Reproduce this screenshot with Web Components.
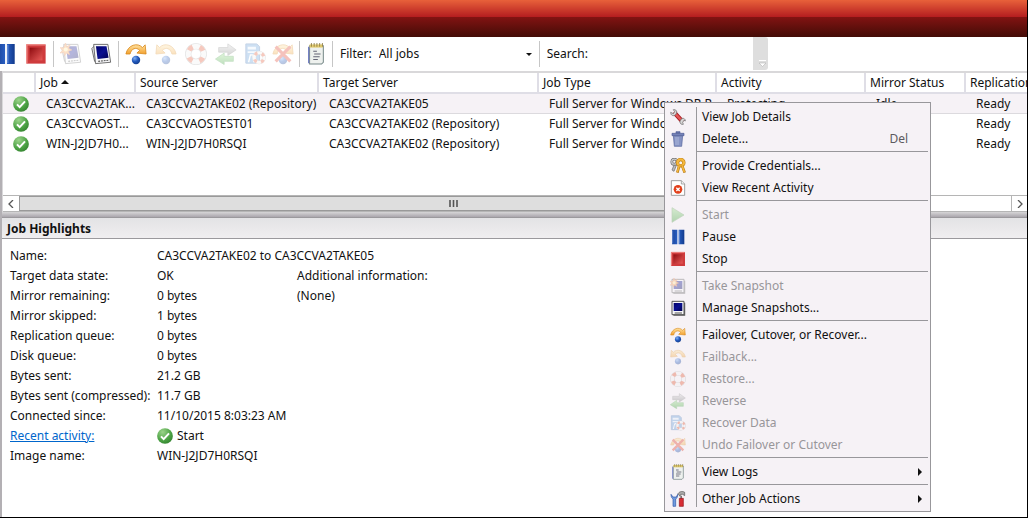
<!DOCTYPE html>
<html lang="en">
<head>
<meta charset="utf-8">
<title>Manage Jobs</title>
<style>
  body { margin: 0; font: 12px/20px "Noto Sans", "Open Sans", sans-serif; color: #111; background: #fff; }
</style>
</head>
<body>
<job-console>
  <job-toolbar slot="toolbar"></job-toolbar>
  <job-list slot="jobs"></job-list>
  <job-highlights slot="details"></job-highlights>
  <context-menu slot="menu">
    <menu-entry icon="wrench">View Job Details</menu-entry>
    <menu-entry icon="trash" shortcut="Del">Delete...</menu-entry>
    <menu-divider></menu-divider>
    <menu-entry icon="keys">Provide Credentials...</menu-entry>
    <menu-entry icon="activity">View Recent Activity</menu-entry>
    <menu-divider></menu-divider>
    <menu-entry icon="start" disabled>Start</menu-entry>
    <menu-entry icon="pause">Pause</menu-entry>
    <menu-entry icon="stop">Stop</menu-entry>
    <menu-divider></menu-divider>
    <menu-entry icon="takesmall" disabled>Take Snapshot</menu-entry>
    <menu-entry icon="snapsmall">Manage Snapshots...</menu-entry>
    <menu-divider></menu-divider>
    <menu-entry icon="failover">Failover, Cutover, or Recover...</menu-entry>
    <menu-entry icon="failback" disabled>Failback...</menu-entry>
    <menu-entry icon="restore" disabled>Restore...</menu-entry>
    <menu-entry icon="reverse" disabled>Reverse</menu-entry>
    <menu-entry icon="recover" disabled>Recover Data</menu-entry>
    <menu-entry icon="undo" disabled>Undo Failover or Cutover</menu-entry>
    <menu-divider></menu-divider>
    <menu-entry icon="logs" submenu>View Logs</menu-entry>
    <menu-divider></menu-divider>
    <menu-entry icon="tools" submenu>Other Job Actions</menu-entry>
  </context-menu>
</job-console>

<script>
const define = (name, html, setup) => customElements.define(name, class extends HTMLElement {
  constructor() {
    super();
    this.attachShadow({ mode: 'open' });
  }
  connectedCallback() {
    this.shadowRoot.innerHTML = typeof html === 'function' ? html(this) : html;
    if (setup) setup(this);
  }
});

/* Icons, all on a 24 x 24 grid */
const defs = `<defs>
  <linearGradient id="blue" x2="1"><stop stop-color="#1b459c"/><stop offset=".5" stop-color="#2a62c8"/><stop offset="1" stop-color="#123a8c"/></linearGradient>
  <linearGradient id="red" x2="1" y2="1"><stop stop-color="#8e0b0f"/><stop offset="1" stop-color="#e85a58"/></linearGradient>
  <linearGradient id="navy" x2="1" y2="1"><stop stop-color="#00006a"/><stop offset=".5" stop-color="#0a1090"/><stop offset="1" stop-color="#000050"/></linearGradient>
  <linearGradient id="gold" x2="0" y2="1"><stop stop-color="#ffe2a0"/><stop offset="1" stop-color="#f3a02c"/></linearGradient>
  <linearGradient id="leaf" x2="0" y2="1"><stop stop-color="#9be08a"/><stop offset="1" stop-color="#2f9a2c"/></linearGradient>
  <linearGradient id="grey" x2="0" y2="1"><stop stop-color="#ddd"/><stop offset="1" stop-color="#777"/></linearGradient>
  <radialGradient id="ball" cx=".35" cy=".3" r=".8"><stop stop-color="#7fb0f4"/><stop offset=".5" stop-color="#2259bd"/><stop offset="1" stop-color="#123a86"/></radialGradient>
  <radialGradient id="ok" cx=".35" cy=".25" r=".85"><stop stop-color="#9bd38a"/><stop offset=".6" stop-color="#4da345"/><stop offset="1" stop-color="#2f7f2c"/></radialGradient>
</defs>`;
const snap = `<path d="M2 6 5 3l3 1v17l-3-1z" fill="#e8e8ec" stroke="#444" stroke-width=".8"/>
  <path d="M4 1.500h15.500l3 19.500L6 22.500z" fill="#f6f6f8" stroke="#555" stroke-width=".9"/>
  <path d="M6.500 3.500h11.500l2.300 12.500-12 1.500z" fill="url(#navy)"/><path d="M9 20l11-1.200" stroke="#555" stroke-width="1.200" stroke-dasharray="2 1"/>`;
const snapSmall = `<path d="M3 2h18v20H3z" fill="#f7f7f9" stroke="#555" stroke-width="1.500"/><path d="M22 4v19H5" fill="none" stroke="#555" stroke-width="1.600"/>
  <path d="M5.500 4.500h13v12h-13z" fill="url(#navy)"/><path d="M7 19.500h11" stroke="#555" stroke-width="1.500"/>`;
const star = `<path d="M6 0l1.400 4 3.600-2-1.600 3.800L13 7.500 9.300 9l1.200 3.700L6.800 11 5 14l-.8-3.700L0 11l2.800-3L0 5l4 .3z" fill="#f6a04c" stroke="#e0662c" stroke-width=".6"/><circle cx="6.300" cy="7" r="2.200" fill="#ffe9a0"/>`;
const arc = `<path d="M1 12C3 2 14-1 19 5l3-3 1 10-10-1 3-3C12 4 7 6 5.500 12z" fill="url(#gold)" stroke="#d98a1e" stroke-width=".9"/>`;
const ball = `<circle cx="12" cy="18.500" r="4.600" fill="url(#ball)"/>`;
const ring = `<circle cx="12" cy="12" r="8.500" fill="none" stroke="#999" stroke-width="6.600"/><circle cx="12" cy="12" r="8.500" fill="none" stroke="#f1f1f1" stroke-width="5.400"/>
  <circle cx="12" cy="12" r="8.500" fill="none" stroke="#e2502c" stroke-width="5.400" stroke-dasharray="5.350 8" stroke-dashoffset="-4"/>`;
const icons = {
  ok: `<circle cx="12" cy="12" r="11.800" fill="url(#ok)"/><path d="M6 12.500l4 4.200L18 8" fill="none" stroke="#fff" stroke-width="3"/>`,
  pause: `<path d="M3 1h8v22H3zM13 1h8.500v22H13z" fill="url(#blue)"/><path d="M4 2v20M14 2v20" stroke="#7ba0e0" stroke-width="1"/>`,
  stop: `<path d="M1.500 1.500h21v21h-21z" fill="#cf3b3d"/><path d="M2 22V2h20" fill="none" stroke="#f08a86" stroke-width="1.500"/><path d="M5 5h14v14H5z" fill="url(#red)"/>`,
  start: `<path d="M3 1l18 11L3 23z" fill="url(#leaf)" stroke="#5a9a50"/>`,
  snap, snapsmall: snapSmall, take: snap + star, takesmall: snapSmall + star,
  failover: arc + ball,
  failback: `<g transform="matrix(-1 0 0 1 24 0)">${arc}</g>${ball}`,
  restore: ring,
  reverse: `<path d="M4 5h10V1l9 6.500-9 6V10H4z" fill="url(#grey)" stroke="#777" stroke-width=".8"/><path d="M20 14.500H10V11l-9.500 6.500L10 23.500V20h10z" fill="url(#leaf)" stroke="#3c9a3c" stroke-width=".8"/>`,
  recover: `<path d="M2 1h12l3 3v18H2z" fill="#5e9bd8" stroke="#3a6cae"/><path d="M4 4h9v3H4zM4 9h9v2H4z" fill="#e4f0fc"/><path d="M5 21l2-8h2l2 8" fill="none" stroke="#fff" stroke-width="1.500"/><g transform="translate(9 8.500) scale(.62)">${ring}</g>`,
  undo: `${arc}${ball}<path d="M4 4l16 16M20 4L4 20" stroke="#e03a24" stroke-width="3.400"/>`,
  logs: `<path d="M5 3h15v18l-2 2H5z" fill="#eef1ee" stroke="#788" stroke-width="1.100"/><path d="M4 4v18" stroke="#6a78c0" stroke-width="1.300"/><path d="M5 1.500h14.500v3.500H5z" fill="#e2cc70"/><path d="M7 0v4M10 0v4M13 0v4M16 0v4M19 0v4" stroke="#857540" stroke-width=".9"/><path d="M9 9h4M10 12h7M9 15h7M9 18h5" stroke="#667" stroke-width="1.300"/>`,
  wrench: `<path d="M6 5l13 14" stroke="#a81e22" stroke-width="6.500"/><path d="M6 5l13 14" stroke="#e65555" stroke-width="3.500"/><path d="M1 5c0 5 4 6 7 4l2-3C11 2 7 0 5 1l2 3-2 3zM23 18c0-4-4-5-6-3l-2 3c-1 4 3 6 5 5l-1-3 2-3z" fill="#d8d8d8" stroke="#666"/>`,
  trash: `<path d="M5 7h14l-1.500 16h-11z" fill="#8794c4" stroke="#55639c"/><path d="M3 3.500h18V7H3zM9 1h6v2H9z" fill="#7482b8" stroke="#4d5a94"/><path d="M9 9v12M12 9v12" stroke="#b4bde0" stroke-width="1.300"/>`,
  keys: `<path d="M7 8l-4 10 3 2 4-10" fill="#bbb" stroke="#666"/><circle cx="6.500" cy="5.500" r="3.800" fill="none" stroke="#666" stroke-width="4"/><circle cx="6.500" cy="5.500" r="3.800" fill="none" stroke="#ccc" stroke-width="2"/><circle cx="16" cy="7" r="4.800" fill="none" stroke="#b87810" stroke-width="5"/><circle cx="16" cy="7" r="4.800" fill="none" stroke="#f4b83e" stroke-width="3.400"/><path d="M14 11l-3 11M18 11l4 11" stroke="#b87810" stroke-width="4"/><path d="M14 11l-3 10M18 11l3.500 10" stroke="#f4b83e" stroke-width="2.400"/>`,
  activity: `<path d="M2 1h15l5 5v17H2z" fill="#fff" stroke="#888" stroke-width="1.200"/><path d="M17 1v5h5" fill="#eee" stroke="#888"/><circle cx="12" cy="14" r="6.500" fill="#e2401c"/><path d="M9.500 11.500l5 5M14.500 11.500l-5 5" stroke="#fff" stroke-width="2"/>`,
  tools: `<path d="M1.500 5c0 5 2 6 3 7v11h4V12c2-1 3-3 3-7l-2 4h-5z" fill="#6f9be0" stroke="#2d55a4"/><path d="M12 4c3-4 7-4 10-2v5l-3-2h-3l-1 3z" fill="#aaa" stroke="#555"/><path d="M15.500 7h2.500v5h-2.500z" fill="#777"/><path d="M14 11h6v12h-6z" fill="#d82c34" stroke="#8e1016"/>`
};
define('job-icon', el => `<style>
  :host { display: block; width: 16px; height: 16px; }
  svg { display: block; width: 100%; height: 100%; }
</style><svg viewBox="0 0 24 24" aria-hidden="true">${defs}${icons[el.getAttribute('name')]}</svg>`);

define('job-console', `<style>
  :host { display: flex; flex-direction: column; position: relative; min-height: 100vh; box-sizing: border-box;
          border: solid #000; border-width: 0 1px 1px 0; overflow: hidden; }
  header { height: 37px; background: linear-gradient(#e8613a, #b41d20 17px, #821312 17px, #430c07); }
  main { flex: 1; display: flex; flex-direction: column; min-width: 0; border-left: 2px solid #b3b0b4; }
</style>
<header></header>
<slot name="toolbar"></slot>
<main><slot name="jobs"></slot><slot name="details"></slot></main>
<slot name="menu"></slot>`);

const tool = (icon, label, cls = '') => `<button type="button" class="${cls}" aria-label="${label}" ${/off/.test(cls) ? 'disabled' : ''}><job-icon name="${icon}"></job-icon></button>`;
define('job-toolbar', `<style>
  :host { display: flex; align-items: center; height: 34px; overflow: hidden; background: #fff; }
  .tools { display: flex; align-items: center; margin-left: -9px; }
  button { display: grid; place-items: center; width: 30px; height: 28px; padding: 0; border: 0; background: none; }
  .narrow { width: 28px; }
  .off job-icon { opacity: .3; }
  job-icon { width: 22px; height: 22px; }
  i { width: 1px; height: 26px; margin: 0 2px; background: #c6c6c6; }
  label { padding: 0 5px; }
  .pick { display: grid; align-items: center; width: 160px; }
  select { grid-area: 1 / 1; appearance: none; width: 100%; height: 22px; padding: 0 2px; border: 0; background: none; font: inherit; color: inherit; }
  .pick svg { grid-area: 1 / 1; justify-self: end; width: 6px; height: 3px; margin-right: 5px; pointer-events: none; }
  input { width: 160px; height: 22px; box-sizing: border-box; border: 0; padding: 0 4px; font: inherit; outline: 0; background: none; }
  .more { align-self: stretch; display: grid; place-items: end center; width: 15px; height: 33px; padding: 0 0 3px 4px; box-sizing: border-box; background: #dedede; border-radius: 0 3px 3px 0; }
</style>
<div class="tools" role="toolbar" aria-label="Job actions">
  ${tool('pause', 'Pause')}${tool('stop', 'Stop')}<i></i>
  ${tool('take', 'Take Snapshot', 'off')}${tool('snap', 'Manage Snapshots')}<i></i>
  ${tool('failover', 'Failover, Cutover, or Recover')}${tool('failback', 'Failback', 'off')}${tool('restore', 'Restore', 'off')}${tool('reverse', 'Reverse', 'off')}${tool('recover', 'Recover Data', 'off narrow')}${tool('undo', 'Undo Failover or Cutover', 'off narrow')}<i></i>
  ${tool('logs', 'View Logs', 'narrow')}<i></i>
</div>
<label for="filter">Filter:</label>
<div class="pick">
  <select id="filter"><option>All jobs</option></select>
  <svg viewBox="0 0 6 3"><path d="M0 0h6L3 3z" fill="#111"/></svg>
</div>
<i></i>
<label for="search">Search:</label>
<input id="search" type="text">
<button type="button" class="more" aria-label="More buttons"><svg width="7" height="7" viewBox="0 0 7 7"><path d="M0 .5h7" stroke="#fff"/><path d="M0 3h7L3.500 6.500z" fill="#fff" stroke="#aaa" stroke-width=".5"/></svg></button>`);

const rows = [
  ['CA3CCVA2TAK...', 'CA3CCVA2TAKE02 (Repository)', 'CA3CCVA2TAKE05', 'Full Server for Windows DR R...', 'Protecting', 'Idle', 'Ready'],
  ['CA3CCVAOST...', 'CA3CCVAOSTEST01', 'CA3CCVA2TAKE02 (Repository)', 'Full Server for Windows', '', '', 'Ready'],
  ['WIN-J2JD7H0...', 'WIN-J2JD7H0RSQI', 'CA3CCVA2TAKE02 (Repository)', 'Full Server for Windows', '', '', 'Ready']
];
define('job-list', `<style>
  :host { display: block; border-top: 2px solid #d9d8da; border-left: 1px solid #d9d8da; }
  .view { height: 122px; overflow: hidden; }
  table { table-layout: fixed; width: 100%; min-width: 1024px; border-collapse: separate; border-spacing: 0; }
  th, td { text-align: left; font-weight: 400; white-space: nowrap; overflow: hidden; padding: 0; box-sizing: border-box; }
  th { height: 21px; line-height: 19px; padding-left: 4px; border-bottom: 2px solid #dfdee6; border-right: 2px solid #dfdee6; }
  th:last-child { border-right: 0; }
  td { height: 20px; line-height: 18px; padding-left: 10px; border-bottom: 1px solid transparent; }
  tr.on td { background: #f6f2f6; border-bottom-color: #dcdade; }
  .sort { display: inline-block; width: 8px; height: 4px; margin-left: 3px; vertical-align: 3px; }
  .bar { display: flex; height: 15px; border: solid #b5b5b5; border-width: 1px 0; background: #fff; }
  .bar button { width: 16px; padding: 0; border: 0; background: #fff; display: grid; place-items: center; }
  .bar button:last-child { border-left: 1px solid #b5b5b5; }
  .track { flex: 1; }
  .thumb { display: grid; place-items: center; width: 87.500%; height: 100%; box-sizing: border-box; background: #dedede; border: 1px solid #999; }
</style>
<div class="view"><table>
  <colgroup><col style="width:33px"><col style="width:100px"><col style="width:183px"><col style="width:220px"><col style="width:178px"><col style="width:149px"><col style="width:100px"><col></colgroup>
  <thead><tr><th aria-label="State"></th><th>Job<svg class="sort" viewBox="0 0 8 4"><path d="M0 4h8L4 0z" fill="#111"/></svg></th><th>Source Server</th><th>Target Server</th><th>Job Type</th><th>Activity</th><th>Mirror Status</th><th>Replication</th></tr></thead>
  <tbody>${rows.map((r, i) => `<tr class="${i ? '' : 'on'}"><td><job-icon name="ok"></job-icon></td>${r.map(c => `<td>${c}</td>`).join('')}</tr>`).join('')}</tbody>
</table></div>
<div class="bar">
  <button type="button" aria-label="Scroll left"><svg width="6" height="8"><path d="M5 0L1 4l4 4" fill="none" stroke="#555" stroke-width="1.300"/></svg></button>
  <div class="track"><div class="thumb"><svg width="9" height="7"><path d="M1 0v7M4.500 0v7M8 0v7" stroke="#555" stroke-width="1.600"/></svg></div></div>
  <button type="button" aria-label="Scroll right"><svg width="6" height="8"><path d="M1 0l4 4-4 4" fill="none" stroke="#555" stroke-width="1.300"/></svg></button>
</div>`);

define('job-highlights', `<style>
  :host { display: block; padding-top: 5px; background: linear-gradient(#d6d5d7, #aaa6ac 5px, transparent 5px); }
  h2 { margin: 0; height: 20px; padding-left: 5px; font: 700 12px/21px "Noto Sans", "Open Sans", sans-serif; background: linear-gradient(#e3e3e5, #f0eef0); border-bottom: 1px solid #9b999d; border-top: 1px solid #9b999d; }
  dl { display: grid; grid-template-columns: 147px 140px auto; justify-content: start; grid-auto-rows: 20px; margin: 0; padding: 7px 0 0 8px; white-space: nowrap; }
  dt { grid-column: 1; }
  dd { margin: 0; grid-column: 2; }
  .extra { grid-column: 3; grid-row: 2; }
  .extra-value { grid-column: 3; grid-row: 3; }
  .state { display: flex; align-items: center; gap: 4px; }
  a { color: #0066cc; }
</style>
<h2>Job Highlights</h2>
<dl>
  <dt>Name:</dt><dd>CA3CCVA2TAKE02 to CA3CCVA2TAKE05</dd>
  <dt>Target data state:</dt><dd>OK</dd>
  <dt class="extra">Additional information:</dt><dd class="extra-value">(None)</dd>
  <dt>Mirror remaining:</dt><dd>0 bytes</dd>
  <dt>Mirror skipped:</dt><dd>1 bytes</dd>
  <dt>Replication queue:</dt><dd>0 bytes</dd>
  <dt>Disk queue:</dt><dd>0 bytes</dd>
  <dt>Bytes sent:</dt><dd>21.2 GB</dd>
  <dt>Bytes sent (compressed):</dt><dd>11.7 GB</dd>
  <dt>Connected since:</dt><dd>11/10/2015 8:03:23 AM</dd>
  <dt><a href="#activity">Recent activity:</a></dt><dd class="state"><job-icon name="ok"></job-icon>Start</dd>
  <dt>Image name:</dt><dd>WIN-J2JD7H0RSQI</dd>
</dl>`);

define('context-menu', `<style>
  :host { display: block; position: absolute; left: 664px; top: 102px; width: 267px; box-sizing: border-box; padding: 3px 2px 1px 0;
          border: 1px solid #98979b; background: linear-gradient(#98979b, #98979b) 31px 4px / 1px calc(100% - 8px) no-repeat #f6f2f6; }
</style><slot></slot>`, el => el.setAttribute('role', 'menu'));

define('menu-divider', `<style>
  :host { display: block; height: 1px; margin: 1px 0 3px 31px; background: #98979b; }
</style>`, el => el.setAttribute('role', 'separator'));

define('menu-entry', el => `<style>
  :host { display: block; }
  button { display: grid; grid-template-columns: 16px 1fr auto; column-gap: 16px; align-items: center; width: 100%; height: 22px; padding: 0 20px 0 5px;
           border: 0; background: none; font: inherit; color: #111; text-align: left; white-space: nowrap; }
  button:disabled { color: #98969a; }
  button:disabled job-icon { opacity: .35; }
  .sub { padding-right: 6px; }
  kbd { font: inherit; color: #5c5a5e; }
</style>
<button type="button" role="menuitem" class="${el.hasAttribute('submenu') ? 'sub' : ''}" ${el.hasAttribute('disabled') ? 'disabled' : ''}>
  <job-icon name="${el.getAttribute('icon')}"></job-icon><span><slot></slot></span>
  ${el.hasAttribute('shortcut') ? `<kbd>${el.getAttribute('shortcut')}</kbd>` : ''}${el.hasAttribute('submenu') ? '<svg width="4" height="8"><path d="M0 0l4 4-4 4z" fill="#111"/></svg>' : ''}
</button>`);
</script>
</body>
</html>
